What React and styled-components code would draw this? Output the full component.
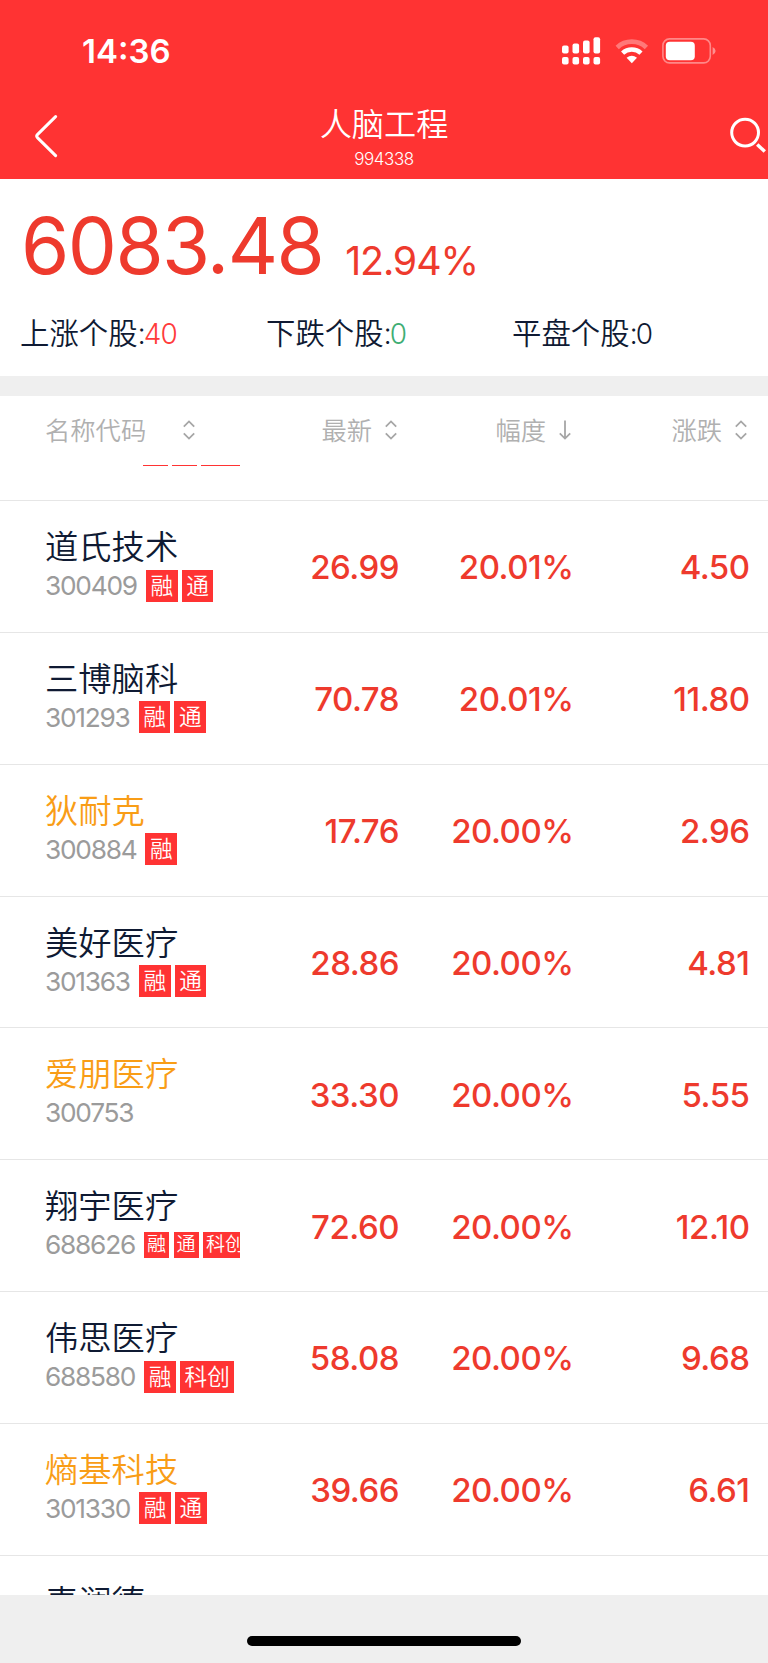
import React from "react";
import styled, { createGlobalStyle } from "styled-components";

const Global = createGlobalStyle`
  * { box-sizing: border-box; }
  html, body { margin: 0; padding: 0; background: #fff; }
  body {
    font-family: Inter, "Noto Sans CJK SC", sans-serif;
    font-synthesis: none;
    color: #0f1a33;
  }
`;

const Screen = styled.div`
  width: 768px;
  height: 1663px;
  display: flex;
  flex-direction: column;
  overflow: hidden;
  background: #fff;
`;

const Top = styled.header`
  flex: none;
  height: 179px;
  background: #ff3333;
  color: #fff;
  display: flex;
  flex-direction: column;
`;

const StatusBar = styled.div`
  height: 102px;
  display: flex;
  justify-content: space-between;
  align-items: center;
  padding: 0 52px 0 82px;
`;

const Clock = styled.div`
  font-size: 33px;
  line-height: 40px;
  font-weight: 600;
  letter-spacing: 0;
`;

const StatusIcons = styled.div`
  display: flex;
  align-items: center;
  gap: 13.5px;
  svg { display: block; }
`;

const NavBar = styled.div`
  flex: 1;
  display: grid;
  grid-template-columns: 120px 1fr 120px;
`;

const BackButton = styled.div`
  padding: 12px 0 0 34px;
`;

const SearchButton = styled.div`
  display: flex;
  justify-content: flex-end;
  padding-top: 14px;
`;

const TitleBlock = styled.div`
  display: flex;
  flex-direction: column;
  align-items: center;
`;

const Title = styled.div`
  margin-top: 2px;
  font-size: 32.2px;
  line-height: 42px;
  font-weight: 350;
`;

const Subtitle = styled.div`
  margin-top: 3px;
  font-size: 17px;
  line-height: 20px;
  font-weight: 300;
  letter-spacing: -0.4px;
`;

const Summary = styled.section`
  flex: none;
  height: 197px;
  padding: 0 20px;
`;

const Quote = styled.div`
  display: flex;
  align-items: baseline;
  height: 125px;
  padding-top: 18px;
  color: #ee3a2d;
`;

const Price = styled.div`
  margin-left: 1px;
  font-size: 78px;
  line-height: 98px;
  font-weight: 400;
  letter-spacing: -1.6px;
`;

const Percent = styled.div`
  margin-left: 22px;
  font-size: 39.3px;
  font-weight: 400;
  letter-spacing: -1.1px;
  position: relative;
  top: 1px;
`;

const Stats = styled.div`
  display: grid;
  grid-template-columns: repeat(3, 246px);
  font-size: 29.4px;
  line-height: 60px;
  font-weight: 350;
`;

const Stat = styled.div`
  white-space: nowrap;
`;

const Colon = styled.span`
  letter-spacing: -2px;
`;

const Count = styled.span`
  font-size: 28px;
  font-weight: 300;
  letter-spacing: -1px;
  color: ${(p) => p.$color};
`;

const Divider = styled.div`
  flex: none;
  height: 20px;
  background: #efefef;
`;

const columns = "240px 159px 174px 176px";

const TableHead = styled.div`
  flex: none;
  height: 69px;
  display: grid;
  grid-template-columns: ${columns};
  color: #b0b0b0;
  font-size: 25.3px;
  font-weight: 350;
`;

const HeadCell = styled.div`
  display: flex;
  align-items: center;
  height: 68px;
  justify-content: ${(p) => (p.$first ? "flex-start" : "flex-end")};
  padding-left: ${(p) => (p.$first ? "45px" : "0")};
  padding-right: ${(p) => (p.$first ? "0" : "2.5px")};
  gap: ${(p) => (p.$first ? "37px" : "12.5px")};
`;

const HeadLabel = styled.span`
  line-height: 40px;
  padding-top: 2px;
`;

const List = styled.main`
  flex: 1;
  min-height: 0;
  overflow: hidden;
`;

const CutRow = styled.div`
  height: 36px;
  border-bottom: 1px solid #e6e6e6;
  display: flex;
  align-items: flex-start;
  gap: 4px;
  padding-left: 143px;
`;

const TagEdge = styled.div`
  width: ${(p) => p.$w}px;
  height: 1px;
  background: #ff3333;
`;

const Row = styled.div`
  height: 131.85px;
  border-bottom: 1px solid #e6e6e6;
  display: grid;
  grid-template-columns: ${columns};
  align-items: center;
`;

const NameCell = styled.div`
  align-self: start;
  padding: 25px 0 0 45px;
  overflow: hidden;
`;

const Name = styled.div`
  font-size: 33.3px;
  line-height: 43px;
  font-weight: 350;
  white-space: nowrap;
  color: ${(p) => (p.$held ? "#f99d16" : "#0f1a33")};
`;

const Meta = styled.div`
  display: flex;
  align-items: center;
  height: 33px;
`;

const Code = styled.div`
  flex: none;
  color: #9b9b9b;
  padding-top: 1px;
  font-size: 26.3px;
  line-height: 32px;
  font-weight: 400;
  letter-spacing: -1.25px;
  margin-right: 9px;
`;

const Tag = styled.div`
  flex: none;
  height: ${(p) => (p.$small ? 26 : 32)}px;
  line-height: ${(p) => (p.$small ? 26 : 32)}px;
  padding: 0 ${(p) => (p.$small ? 3 : 4.6)}px;
  margin-right: ${(p) => (p.$small ? 4.5 : 4)}px;
  font-size: ${(p) => (p.$small ? 19 : 22.6)}px;
  font-weight: 350;
  color: #fff;
  background: #ff3333;
`;

const Value = styled.div`
  padding-top: 2px;
  text-align: right;
  color: #ee3a2d;
  font-size: 33px;
  line-height: 40px;
  font-weight: 500;
  letter-spacing: -0.5px;
`;

const ChangeValue = styled(Value)`
  padding-left: 10px;
  margin-right: -0.5px;
`;

const Footer = styled.footer`
  flex: none;
  height: 68px;
  background: #efefef;
  display: flex;
  justify-content: center;
  padding-top: 41px;
`;

const HomeBar = styled.div`
  width: 274px;
  height: 10px;
  border-radius: 5px;
  background: #000;
`;

const SortIcon = () => (
  <svg width="12" height="20" viewBox="0 0 12 20" fill="none" stroke="#a6a6a6" strokeWidth="1.8">
    <path d="M0.8 6.6 6 1.4 11.2 6.6M0.8 13.4 6 18.6 11.2 13.4" />
  </svg>
);

const DownIcon = () => (
  <svg width="12" height="20" viewBox="0 0 12 20" fill="none" stroke="#a6a6a6" strokeWidth="1.8">
    <path d="M6 0.5V18.5M0.8 13.4 6 18.6 11.2 13.4" />
  </svg>
);

const Signal = () => (
  <svg width="39" height="28" viewBox="0 0 39 28" fill="#fff">
    <rect x="0" y="8.6" width="6.6" height="8" rx="2" />
    <rect x="10.5" y="6.6" width="6.6" height="10" rx="2" />
    <rect x="21" y="3.6" width="6.6" height="13" rx="2" />
    <rect x="31.5" y="0.2" width="6.6" height="16.4" rx="2" />
    <rect x="0" y="20" width="6.6" height="7.4" rx="2" />
    <rect x="10.5" y="20" width="6.6" height="7.4" rx="2" />
    <rect x="21" y="20" width="6.6" height="7.4" rx="2" />
    <rect x="31.5" y="20" width="6.6" height="7.4" rx="2" />
  </svg>
);

const Wifi = () => (
  <svg width="34" height="25" viewBox="0 0 34 25" fill="none">
    <path d="M2.2 8.4a21.5 21.5 0 0 1 29.2 0" stroke="#fff" strokeOpacity=".34" strokeWidth="4.8" />
    <path d="M7.6 14.1a13.6 13.6 0 0 1 18.4 0" stroke="#fff" strokeWidth="4.6" />
    <path d="M11.6 18.8Q16.8 14.9 22 18.8L16.8 24.2Z" fill="#fff" />
  </svg>
);

const Battery = () => (
  <svg width="54" height="26" viewBox="0 0 54 26">
    <rect x="0.9" y="0.9" width="47.4" height="24" rx="6.6" fill="none" stroke="#fff" strokeOpacity=".42" strokeWidth="1.6" />
    <rect x="3.8" y="3.8" width="29" height="18.4" rx="4" fill="#fff" />
    <path d="M50.6 9v8q3-1.5 3-4t-3-4Z" fill="#fff" fillOpacity=".45" />
  </svg>
);

const stocks = [
  { name: "道氏技术", code: "300409", tags: ["融", "通"], price: "26.99", pct: "20.01%", diff: "4.50" },
  { name: "三博脑科", code: "301293", tags: ["融", "通"], price: "70.78", pct: "20.01%", diff: "11.80" },
  { name: "狄耐克", held: true, code: "300884", tags: ["融"], price: "17.76", pct: "20.00%", diff: "2.96" },
  { name: "美好医疗", code: "301363", tags: ["融", "通"], price: "28.86", pct: "20.00%", diff: "4.81" },
  { name: "爱朋医疗", held: true, code: "300753", tags: [], price: "33.30", pct: "20.00%", diff: "5.55" },
  { name: "翔宇医疗", code: "688626", tags: ["融", "通", "科创"], price: "72.60", pct: "20.00%", diff: "12.10" },
  { name: "伟思医疗", code: "688580", tags: ["融", "科创"], price: "58.08", pct: "20.00%", diff: "9.68" },
  { name: "熵基科技", held: true, code: "301330", tags: ["融", "通"], price: "39.66", pct: "20.00%", diff: "6.61" },
  { name: "麦澜德", tags: [] },
];

function StockRow({ stock }) {
  const small = stock.tags.length > 2;
  return (
    <Row>
      <NameCell>
        <Name $held={stock.held}>{stock.name}</Name>
        <Meta>
          <Code>{stock.code}</Code>
          {stock.tags.map((t) => (
            <Tag key={t} $small={small}>{t}</Tag>
          ))}
        </Meta>
      </NameCell>
      <Value>{stock.price}</Value>
      <ChangeValue>{stock.pct}</ChangeValue>
      <ChangeValue>{stock.diff}</ChangeValue>
    </Row>
  );
}

export default function App() {
  return (
    <Screen>
      <Global />
      <Top>
        <StatusBar>
          <Clock>14:36</Clock>
          <StatusIcons>
            <Signal />
            <Wifi />
            <Battery />
          </StatusIcons>
        </StatusBar>
        <NavBar>
          <BackButton>
            <svg width="24" height="44" viewBox="0 0 24 44" fill="none" stroke="#fff" strokeWidth="3" strokeLinecap="round" strokeLinejoin="round">
              <path d="M21.6 2.6 3.4 20.6Q2 22 3.4 23.6L21.6 41.6" />
            </svg>
          </BackButton>
          <TitleBlock>
            <Title>人脑工程</Title>
            <Subtitle>994338</Subtitle>
          </TitleBlock>
          <SearchButton>
            <svg width="38" height="40" viewBox="0 0 38 40" fill="none" stroke="#fff" strokeWidth="3">
              <circle cx="15.1" cy="16.6" r="13.4" />
              <path d="M27.2 28.4 34.8 35.6" strokeWidth="3.4" />
            </svg>
          </SearchButton>
        </NavBar>
      </Top>
      <Summary>
        <Quote>
          <Price>6083.48</Price>
          <Percent>12.94%</Percent>
        </Quote>
        <Stats>
          <Stat>上涨个股<Colon>:</Colon><Count $color="#ff3b3b">40</Count></Stat>
          <Stat>下跌个股<Colon>:</Colon><Count $color="#3fae74">0</Count></Stat>
          <Stat>平盘个股<Colon>:</Colon><Count $color="#0f1a33">0</Count></Stat>
        </Stats>
      </Summary>
      <Divider />
      <TableHead>
        <HeadCell $first><HeadLabel>名称代码</HeadLabel><SortIcon /></HeadCell>
        <HeadCell><HeadLabel>最新</HeadLabel><SortIcon /></HeadCell>
        <HeadCell><HeadLabel>幅度</HeadLabel><DownIcon /></HeadCell>
        <HeadCell><HeadLabel>涨跌</HeadLabel><SortIcon /></HeadCell>
      </TableHead>
      <List>
        <CutRow>
          <TagEdge $w={25} />
          <TagEdge $w={25} />
          <TagEdge $w={39} />
        </CutRow>
        {stocks.map((s) => (
          <StockRow key={s.name} stock={s} />
        ))}
      </List>
      <Footer>
        <HomeBar />
      </Footer>
    </Screen>
  );
}
